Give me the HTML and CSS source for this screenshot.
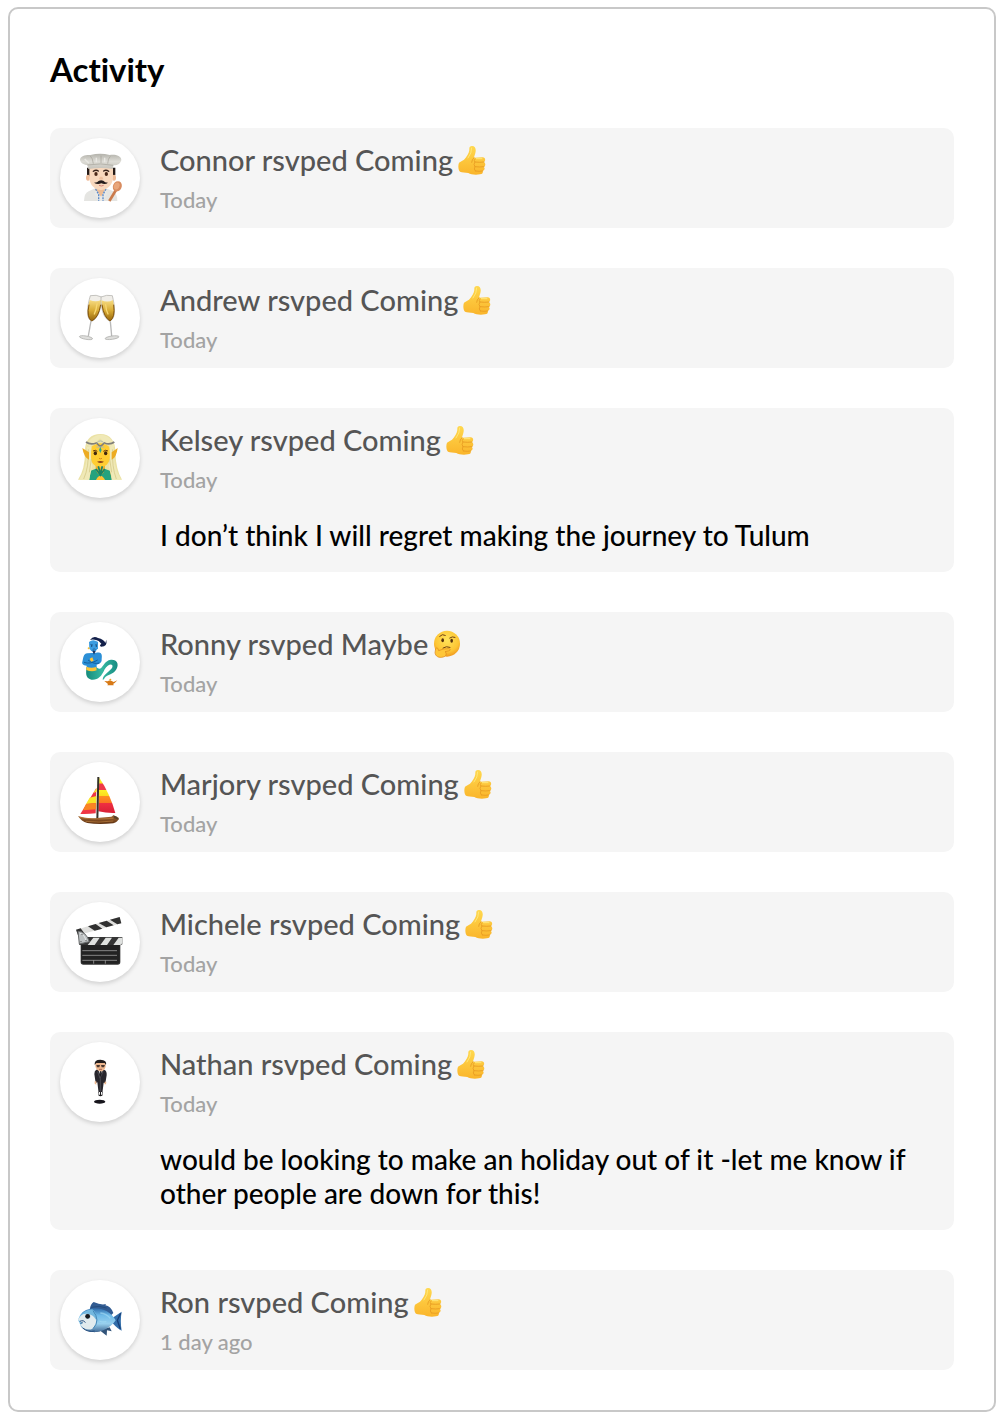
FILE: index.html
```html
<!DOCTYPE html>
<html lang="en">
<head>
<meta charset="utf-8">
<meta name="viewport" content="width=device-width, initial-scale=1">
<title>Activity</title>
<link rel="stylesheet" href="styles.css">
</head>
<body>
<svg class="defs" aria-hidden="true">
  <defs>
    <linearGradient id="skin" x1="0" y1="0" x2="0" y2="1"><stop offset="0" stop-color="#ffd84e"/><stop offset="1" stop-color="#fab52b"/></linearGradient>
    <radialGradient id="face" cx=".5" cy=".35" r=".65"><stop offset="0" stop-color="#ffe35a"/><stop offset=".7" stop-color="#fdc534"/><stop offset="1" stop-color="#f0981f"/></radialGradient>
    <linearGradient id="hat" x1="0" y1="0" x2="0" y2="1"><stop offset="0" stop-color="#b4b3ac"/><stop offset=".5" stop-color="#dddcd6"/><stop offset="1" stop-color="#c4c2ba"/></linearGradient>
    <linearGradient id="wine" x1="0" y1="0" x2="0" y2="1"><stop offset="0" stop-color="#f7dc83"/><stop offset=".5" stop-color="#d9ac35"/><stop offset="1" stop-color="#96650b"/></linearGradient>
    <linearGradient id="tail" x1="0" y1="0" x2="1" y2="0"><stop offset="0" stop-color="#168b7b"/><stop offset=".5" stop-color="#36b8a1"/><stop offset="1" stop-color="#168c82"/></linearGradient>
    <linearGradient id="sail" x1="0" y1="0" x2="0" y2="1"><stop offset="0" stop-color="#f6f028"/><stop offset=".16" stop-color="#f9e820"/><stop offset=".17" stop-color="#ef3948"/><stop offset=".34" stop-color="#ef3948"/><stop offset=".35" stop-color="#fcf02b"/><stop offset=".52" stop-color="#fbdb1e"/><stop offset=".53" stop-color="#ff8c22"/><stop offset=".72" stop-color="#f97422"/><stop offset=".73" stop-color="#ef2f41"/><stop offset="1" stop-color="#d81f36"/></linearGradient>
    <linearGradient id="hull" x1="0" y1="0" x2="0" y2="1"><stop offset="0" stop-color="#a86c35"/><stop offset="1" stop-color="#5c3011"/></linearGradient>
    <linearGradient id="fish" x1="0" y1="0" x2="0" y2="1"><stop offset="0" stop-color="#2f6cab"/><stop offset=".3" stop-color="#6fbbe8"/><stop offset=".65" stop-color="#98d0ee"/><stop offset="1" stop-color="#416b97"/></linearGradient>
    <symbol id="thumb" viewBox="50 30 84 90">
      <path fill="url(#skin)" d="M53 83 Q60 78 68 74 C76 66 83 55 84 45 C83 36 86 33 92 33 C101 33 104 41 103 49 C102 57 99 63 98 68 L123 67 C133 66 134 79 127 81 C134 84 133 94 127 95 C132 99 130 107 124 108 C126 115 122 118 116 118 C101 121 88 118 81 114 C72 112 62 113 56 110 C50 104 50 90 53 83Z"/>
      <path fill="none" stroke="#e79a21" stroke-width="2.5" stroke-linecap="round" d="M98 68 Q91 75 91 82 M101 81 Q115 83 128 81 M101 95 Q115 97 128 95 M102 108 Q114 110 124 108 M101 72 Q96 78 101 81 Q95 88 101 95 Q96 102 102 108"/>
      <path fill="none" stroke="#ffe779" stroke-width="3" stroke-linecap="round" d="M91 39 Q92 54 80 69 M105 71 L122 71"/>
    </symbol>
    <symbol id="thinking" viewBox="32 30 84 84">
      <circle cx="74" cy="71" r="39" fill="url(#face)"/>
      <path fill="none" stroke="#704213" stroke-width="3" stroke-linecap="round" d="M52 49 Q60 40 69 46 M82 54 Q90 48 98 52 M62 84 Q72 77 83 82"/>
      <ellipse cx="61" cy="61" rx="4" ry="6" fill="#56300e"/><ellipse cx="88" cy="62" rx="4" ry="6" fill="#56300e"/>
      <path fill="#ffc638" stroke="#dc8319" stroke-width="2" d="M40 86 C45 81 47 86 49 92 Q62 85 80 86 C86 87 84 93 77 93 L68 95 C74 99 72 109 63 111 C50 115 39 109 38 98Z"/>
    </symbol>
  </defs>
</svg>
<main class="card">
  <h1 class="card-title">Activity</h1>
  <ul class="feed">
    <li class="item">
      <div class="avatar">
        <svg viewBox="30 30 240 240" role="img" aria-label="Chef">
          <path fill="#e5e5e2" d="M102 219 Q103 195 116 190 L137 180 H166 L190 190 Q202 198 202 219Z"/>
          <path fill="#edbd96" d="M138 174 H167 V187 L153 207 L136 187Z"/>
          <path fill="#e9e9e6" d="M138 183 L153 207 L166 183 L171 199 L158 219 H148 L133 199Z"/>
          <path fill="none" stroke="#5888c8" stroke-width="4" stroke-dasharray="6 3" d="M137 183 L146 199 V219 M168 183 L159 199 V219"/>
          <path fill="#251a17" d="M111 119 H196 V141 L190 148 H117 L111 139Z"/>
          <ellipse cx="114" cy="149" rx="6" ry="9" fill="#eebb98"/><ellipse cx="192" cy="149" rx="6" ry="9" fill="#eebb98"/>
          <path fill="#f8d8bd" d="M118 120 H189 V150 C187 174 169 186 153 186 C137 186 119 173 118 150Z"/>
          <path fill="none" stroke="#37231b" stroke-width="4" stroke-linecap="round" d="M130 130 Q138 124 145 129 M161 129 Q168 124 176 130"/>
          <ellipse cx="138" cy="138" rx="5" ry="6" fill="#4a2818"/><ellipse cx="169" cy="138" rx="5" ry="6" fill="#4a2818"/>
          <path fill="#edc09f" d="M147 153 Q153 158 160 153 L157 146 H150Z"/>
          <path fill="#241c1b" d="M132 164 Q142 164 147 158 Q153 155 160 158 Q164 164 174 164 Q166 171 154 166 Q142 171 132 164Z"/>
          <path fill="none" stroke="#d48378" stroke-width="3" d="M147 172 Q154 176 161 172"/>
          <path fill="url(#hat)" d="M90 95 C91 84 108 80 121 81 Q151 74 179 81 C196 78 213 84 214 95 C213 106 201 113 190 112 L189 123 Q153 117 115 123 L112 111 C101 110 91 104 90 95Z"/>
          <path fill="none" stroke="#a4a299" stroke-width="2" d="M112 111 Q152 104 190 112 M121 84 Q128 90 130 107 M153 83 V105 M181 85 Q174 91 173 107"/>
          <path fill="none" stroke="#e9e8e3" stroke-width="4" d="M139 89 V103 M164 89 V103 M104 93 Q111 100 117 106"/>
          <path stroke="#ca7b4c" stroke-width="8" d="M198 186 L178 219"/>
          <ellipse cx="202" cy="175" rx="13" ry="16" transform="rotate(25 202 175)" fill="#d88c60"/>
          <ellipse cx="200" cy="174" rx="8" ry="11" transform="rotate(25 200 174)" fill="#e9a67b"/>
        </svg>
      </div>
      <div class="body">
        <p class="name">Connor rsvped Coming <svg class="emoji" role="img" aria-label="Thumbs up"><use href="#thumb"/></svg></p>
        <p class="time">Today</p>
      </div>
    </li>
    <li class="item">
      <div class="avatar">
        <svg viewBox="30 30 240 240" role="img" aria-label="Clinking glasses">
          <path fill="#f0eee9" stroke="#aaa9a4" stroke-width="2" d="M121 83 Q139 79 155 87 C155 107 149 151 125 160 C106 150 112 114 121 83Z"/>
          <path fill="url(#wine)" d="M119 96 Q138 104 153 96 C153 120 144 151 125 159 C108 149 113 117 119 96Z"/>
          <path fill="none" stroke="#f8d873" stroke-width="4" stroke-linecap="round" d="M141 108 Q139 126 133 138"/>
          <path fill="none" stroke="#84540d" stroke-width="3" d="M117 110 Q109 149 125 159 Q146 149 152 110"/>
          <path fill="none" stroke="#b8b8b8" stroke-width="4" d="M123 159 L115 204"/>
          <ellipse cx="108" cy="209" rx="20" ry="5" transform="rotate(10 108 209)" fill="#dededc" stroke="#a6a6a4" stroke-width="2"/>
          <path fill="#f0eee9" stroke="#aaa9a4" stroke-width="2" d="M153 87 Q170 79 187 83 C194 112 200 149 180 160 C159 151 152 118 153 87Z"/>
          <path fill="url(#wine)" d="M154 97 Q174 105 189 96 C194 122 196 149 180 159 C161 149 155 119 154 97Z"/>
          <path fill="none" stroke="#f8d873" stroke-width="4" stroke-linecap="round" d="M167 110 Q168 126 174 138"/>
          <path fill="none" stroke="#84540d" stroke-width="3" d="M156 110 Q162 149 180 159 Q196 149 191 110"/>
          <path fill="none" stroke="#b8b8b8" stroke-width="4" d="M181 160 L185 204"/>
          <ellipse cx="186" cy="209" rx="21" ry="5" transform="rotate(-8 186 209)" fill="#dededc" stroke="#a6a6a4" stroke-width="2"/>
        </svg>
      </div>
      <div class="body">
        <p class="name">Andrew rsvped Coming <svg class="emoji" role="img" aria-label="Thumbs up"><use href="#thumb"/></svg></p>
        <p class="time">Today</p>
      </div>
    </li>
    <li class="item">
      <div class="avatar">
        <svg viewBox="30 30 240 240" role="img" aria-label="Elf">
          <path fill="#ebe2a5" d="M84 215 Q105 185 105 131 C104 94 124 78 151 78 C181 78 196 99 196 132 Q198 187 216 215Z"/>
          <path fill="#f2b126" d="M137 168 H165 V190 H188 L181 216 H120 L121 190 H137Z"/>
          <path fill="#ffcd32" d="M121 119 Q151 92 181 119 V145 C179 168 164 178 151 178 C137 178 122 167 121 145Z"/>
          <path fill="#24a27e" d="M118 216 L122 188 L138 182 Q139 197 151 201 Q164 196 163 182 L180 188 L185 216 H164 L151 204 L139 216Z"/>
          <path fill="#ffc234" d="M138 216 Q151 191 165 216Z"/>
          <path fill="#f0e9b7" d="M151 80 C127 83 113 98 109 118 Q130 114 150 91 Q172 115 194 117 C191 96 174 81 151 80Z M111 111 L125 116 Q120 151 127 174 L117 215 H88 Q115 173 111 111Z M191 111 L178 116 Q182 151 176 176 L187 215 H213 Q187 174 191 111Z"/>
          <path fill="none" stroke="#cfc37f" stroke-width="2" d="M115 124 Q117 178 101 213 M188 124 Q185 176 199 213 M124 153 L118 193 M179 153 L185 193"/>
          <path fill="#edab22" d="M97 120 L117 133 V155 Q102 149 97 120Z M203 120 L185 133 V155 Q199 150 203 120Z"/>
          <path fill="none" stroke="#807f7a" stroke-width="5" d="M108 102 Q121 112 139 105 L151 116 L163 105 Q180 112 193 102"/>
          <path fill="none" stroke="#aeb9b0" stroke-width="3" d="M139 106 Q151 91 163 106 M139 117 H163"/>
          <path fill="#28a694" d="M151 117 L155 126 L151 135 L147 126Z"/>
          <ellipse cx="136" cy="136" rx="5" ry="6" fill="#42270d"/><ellipse cx="167" cy="136" rx="5" ry="6" fill="#42270d"/>
          <path fill="none" stroke="#6b3a0c" stroke-width="3" d="M129 129 Q136 124 142 130 M160 130 Q167 124 174 129"/>
          <path fill="none" stroke="#db8a19" stroke-width="3" d="M147 151 Q151 154 156 151"/>
          <path fill="#8a4217" d="M141 161 Q151 157 162 161 Q152 169 141 161Z"/>
          <path fill="none" stroke="#188365" stroke-width="5" d="M138 183 L151 201 L164 183 M145 175 L151 198 L157 175"/>
        </svg>
      </div>
      <div class="body">
        <p class="name">Kelsey rsvped Coming <svg class="emoji" role="img" aria-label="Thumbs up"><use href="#thumb"/></svg></p>
        <p class="time">Today</p>
        <p class="message">I don’t think I will regret making the journey to Tulum</p>
      </div>
    </li>
    <li class="item">
      <div class="avatar">
        <svg viewBox="30 30 240 240" role="img" aria-label="Genie">
          <path fill="url(#tail)" d="M109 166 Q122 174 139 166 C158 182 158 145 183 143 C205 142 208 161 196 176 C186 189 165 188 162 202 L158 203 C158 187 182 178 187 166 C191 154 174 154 164 172 C154 195 143 205 124 203 C104 198 109 181 109 166Z"/>
          <path fill="#2b8fd6" d="M112 124 Q101 123 98 145 Q92 161 110 161 V170 H140 V158 Q157 154 155 141 C158 122 150 121 139 122Z"/>
          <path fill="#3a9ce0" d="M117 90 Q129 80 144 90 L144 109 Q132 130 118 110Z"/>
          <path fill="#13204a" d="M120 84 Q130 70 144 78 Q162 82 166 93 L169 83 Q173 104 154 104 Q146 102 154 95 Q146 85 138 84 Q128 81 120 84Z"/>
          <path fill="#12305f" d="M127 116 Q131 114 137 117 L132 128Z"/>
          <path fill="none" stroke="#175087" stroke-width="2" d="M121 97 L129 99 M135 99 L142 96 M128 112 Q133 109 137 113"/>
          <circle cx="125" cy="102" r="2" fill="#122c50"/><circle cx="139" cy="102" r="2" fill="#122c50"/>
          <path fill="none" stroke="#15609e" stroke-width="3" d="M102 151 Q120 158 143 144 M114 144 Q132 158 148 153"/>
          <path fill="#ffc536" d="M119 140 L127 136 L131 146 L123 149Z M109 164 Q123 170 139 165 L140 175 Q125 181 109 174Z"/>
          <circle cx="116" cy="109" r="3" fill="#f6bf36"/>
          <path fill="#d77916" d="M163 207 L173 208 Q178 203 185 207 L191 210 L202 205 L194 213 Q188 219 174 216Z M174 216 L190 216 L191 220 H172Z"/>
          <circle cx="181" cy="203" r="3" fill="#e9a32c"/>
        </svg>
      </div>
      <div class="body">
        <p class="name">Ronny rsvped Maybe <svg class="emoji" role="img" aria-label="Thinking face"><use href="#thinking"/></svg></p>
        <p class="time">Today</p>
      </div>
    </li>
    <li class="item">
      <div class="avatar">
        <svg viewBox="30 30 240 240" role="img" aria-label="Sailboat">
          <path fill="url(#sail)" d="M148 77 Q180 125 196 183 Q170 184 145 178Z"/>
          <path fill="#ef3545" d="M139 108 L91 186 Q114 187 137 184Z"/>
          <path fill="#f9e527" d="M140 108 L130 123 L140 119Z M119 137 L139 132 V153 L108 156Z"/>
          <path fill="#fa8423" d="M108 156 L139 153 L138 172 L99 175Z"/>
          <path fill="none" stroke="#353229" stroke-width="6" d="M145 75 L142 203"/>
          <path fill="url(#hull)" d="M84 192 Q113 202 149 197 L184 194 L190 190 L207 198 Q203 211 190 214 Q145 219 112 213 Q94 208 84 192Z"/>
          <path fill="none" stroke="#bd803f" stroke-width="2" d="M88 196 Q126 204 190 199 M107 208 Q145 213 190 207"/>
          <path fill="#57422b" d="M190 190 L201 194 L207 203 L192 199Z"/>
        </svg>
      </div>
      <div class="body">
        <p class="name">Marjory rsvped Coming <svg class="emoji" role="img" aria-label="Thumbs up"><use href="#thumb"/></svg></p>
        <p class="time">Today</p>
      </div>
    </li>
    <li class="item">
      <div class="avatar">
        <svg viewBox="30 30 240 240" role="img" aria-label="Clapper board">
          <path fill="#353535" d="M90 135 H217 V157 L211 160 V210 Q211 218 203 218 H100 Q92 218 92 210 V159L87 158Z"/>
          <path fill="#222" d="M94 159 H209 V208 Q209 215 202 215 H101 Q94 215 94 208Z"/>
          <path fill="#dededc" d="M78 113 L209 75 L214 94 L84 130Z"/>
          <path fill="#303030" d="M114 103 L137 96 L157 110 L134 116Z M146 93 L170 86 L191 100 L169 106Z M180 83 L209 75 L214 94 L202 97Z M78 113 L92 109 L104 125 L84 130Z"/>
          <path fill="#dfe1df" d="M113 159 L130 137 H149 L134 159Z M151 159 L167 137 H186 L171 159Z M190 159 L206 137 H217 V154 L211 159Z"/>
          <path fill="#bdc1c2" stroke="#686a6b" stroke-width="3" d="M84 118 Q108 118 118 149 L88 156Z"/>
          <path fill="none" stroke="#e6e8e8" stroke-width="3" d="M90 124 Q104 127 108 147"/>
          <circle cx="96" cy="127" r="2" fill="#555"/><circle cx="93" cy="149" r="2" fill="#555"/><circle cx="108" cy="146" r="2" fill="#555"/>
          <path fill="none" stroke="#b5b5b5" stroke-width="2" d="M97 176 H201 M97 190 H201 M97 205 H201 M131 205 V215 M166 205 V215"/>
        </svg>
      </div>
      <div class="body">
        <p class="name">Michele rsvped Coming <svg class="emoji" role="img" aria-label="Thumbs up"><use href="#thumb"/></svg></p>
        <p class="time">Today</p>
      </div>
    </li>
    <li class="item">
      <div class="avatar">
        <svg viewBox="30 30 240 240" role="img" aria-label="Levitating person in suit">
          <ellipse cx="149" cy="209" rx="17" ry="6" fill="#17151c"/>
          <path fill="#28262c" d="M139 113 Q151 109 164 114 Q171 118 170 130 L166 154 L161 152 L157 184 H146 L142 151 L137 153 L133 126 Q133 116 139 113Z"/>
          <path fill="#ddd" d="M145 115 L151 128 L159 115Z"/>
          <path fill="#15151a" d="M150 116 H154 L155 131 L151 139Z"/>
          <path fill="none" stroke="#5b5960" stroke-width="2" d="M143 119 L150 139 L159 119 M151 139 V179"/>
          <path fill="#eeb78f" d="M136 91 Q151 81 167 91 V104 Q163 118 151 118 Q139 117 136 103Z M134 148 H139 V158 L134 155Z M164 149 H169 L168 157 H163Z"/>
          <path fill="#211c1d" d="M134 99 Q132 83 151 83 Q172 84 168 99 L164 93 H139Z"/>
          <path fill="#4d3a32" d="M139 99 H150 L148 106 H141Z M153 99 H165 L162 106 H155Z"/>
          <path fill="none" stroke="#8b3f36" stroke-width="2" d="M147 112 H156"/>
          <path fill="#1c1b1e" d="M146 179 H157 L158 190 Q151 196 145 190Z"/>
          <path fill="#f4f4f4" d="M147 180 H150 V188 H146Z M153 180 H156 L157 188 H153Z"/>
        </svg>
      </div>
      <div class="body">
        <p class="name">Nathan rsvped Coming <svg class="emoji" role="img" aria-label="Thumbs up"><use href="#thumb"/></svg></p>
        <p class="time">Today</p>
        <p class="message">would be looking to make an holiday out of it -let me know if other people are down for this!</p>
      </div>
    </li>
    <li class="item">
      <div class="avatar">
        <svg viewBox="30 30 240 240" role="img" aria-label="Fish">
          <path fill="#315b92" d="M119 119 Q121 103 131 96 Q153 106 168 102 L166 106 Q182 108 190 129 L174 145Z"/>
          <path fill="#326da9" d="M187 144 Q201 134 215 125 Q210 151 215 182 Q203 177 188 160Z"/>
          <path fill="#315379" d="M148 180 L170 197 L171 181 L185 184 L179 172Z M118 172 L132 187 L151 184Z"/>
          <path fill="url(#fish)" d="M84 149 Q92 120 122 116 C151 111 182 122 197 151 C178 181 133 196 106 179 Q93 174 91 165Z"/>
          <path fill="#e1ebee" d="M84 149 Q97 126 124 120 C150 137 140 166 126 177 Q114 182 99 173 L91 164 L99 160Z"/>
          <path fill="#73b8df" d="M96 133 Q105 119 127 118 Q144 130 139 151 Q127 126 96 133Z"/>
          <path fill="none" stroke="#4388b8" stroke-width="3" d="M129 122 Q152 151 130 175"/>
          <path fill="none" stroke="#a6ddf5" stroke-width="4" opacity=".6" d="M151 129 Q169 131 181 145 M148 153 Q158 158 169 154"/>
          <path fill="none" stroke="#244d7e" stroke-width="3" d="M89 154 Q102 149 106 158 M91 160 L98 158 M98 174 Q114 188 134 183 M123 112 Q148 105 170 114"/>
          <circle cx="113" cy="139" r="8" fill="#9eb9c7"/><circle cx="113" cy="139" r="7" fill="#16191d"/>
          <path fill="none" stroke="#183f78" stroke-width="4" d="M212 130 L202 151 L211 177"/>
        </svg>
      </div>
      <div class="body">
        <p class="name">Ron rsvped Coming <svg class="emoji" role="img" aria-label="Thumbs up"><use href="#thumb"/></svg></p>
        <p class="time">1 day ago</p>
      </div>
    </li>
  </ul>
</main>
</body>
</html>
```
FILE: styles.css
```css
* { box-sizing: border-box; }

body {
  margin: 7px 10px 8px 8px;
  background: #fff;
  color: #000;
  font-family: Lato, "Liberation Sans", sans-serif;
  font-size: 28px;
  font-weight: 500;
  line-height: 34px;
  font-variant-ligatures: none;
}

.defs {
  position: absolute;
  width: 0;
  height: 0;
}

.card {
  padding: 40px;
  border: 2px solid #c8c8c8;
  border-radius: 10px;
}

.card-title {
  margin: 0 0 39px;
  font-size: 33px;
  line-height: 40px;
  font-weight: 700;
}

.feed {
  display: flex;
  flex-direction: column;
  gap: 40px;
  margin: 0;
  padding: 0;
  list-style: none;
}

.item {
  display: flex;
  gap: 20px;
  padding: 10px;
  border-radius: 10px;
  background: #f5f5f5;
}

.avatar {
  flex: none;
  width: 80px;
  height: 80px;
  border-radius: 50%;
  background: #fff;
  box-shadow: 0 2px 4px rgba(0, 0, 0, 0.15);
}

.avatar svg {
  display: block;
  width: 100%;
  height: 100%;
}

.body {
  flex: 1;
  min-width: 0;
}

.name,
.time,
.message {
  margin: 0;
}

.name {
  display: flex;
  align-items: center;
  gap: 5px;
  color: #555;
  font-size: 29px;
  line-height: 44px;
}

.emoji {
  width: 28px;
  height: 30px;
}

.time {
  color: #a3a3a3;
  font-size: 22px;
  line-height: 36px;
}

.message {
  padding: 20px 0 10px;
}
```
